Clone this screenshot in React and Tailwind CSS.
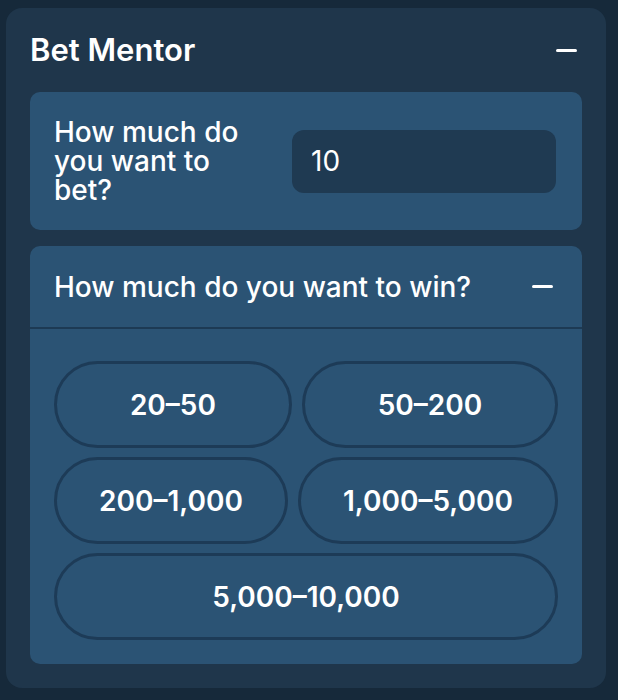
import React from "react";

const ranges = ["20–50", "50–200", "200–1,000", "1,000–5,000", "5,000–10,000"];

function MinusBar() {
  return <span className="block h-[3px] w-[21px] rounded-full bg-white" />;
}

export default function App() {
  return (
    <div
      className="min-h-[700px] bg-[#16293a] pl-[6px] pt-[8px] text-white"
      style={{ fontFamily: "Inter, 'Noto Sans', sans-serif" }}
    >
      <div className="flex h-[680px] w-[600px] flex-col rounded-[16px] bg-[#1f364b] p-6">
        <div className="mb-6 flex h-[36px] items-center justify-between">
          <h1 className="text-[31px] font-semibold leading-[36px]">Bet Mentor</h1>
          <span className="mr-[5px]">
            <MinusBar />
          </span>
        </div>

        <div className="flex h-[138px] items-center justify-between rounded-[10px] bg-[#2b5374] pl-6 pr-[26px]">
          <label className="w-[210px] text-[28px] font-medium leading-[29px]">
            How much do you want to bet?
          </label>
          <input
            readOnly
            value="10"
            className="h-[63px] w-[264px] rounded-[12px] bg-[#1f3a52] px-[19px] text-[28px] text-white outline-none"
          />
        </div>

        <div className="mt-4 flex-1 rounded-[10px] bg-[#2b5374]">
          <div className="flex h-[83px] items-center justify-between border-b-2 border-[#1d3a54] pl-6 pr-[29px]">
            <span className="text-[28px] font-medium">How much do you want to win?</span>
            <MinusBar />
          </div>
          <div className="flex flex-wrap gap-x-[10px] gap-y-[9px] px-6 pb-6 pt-8">
            {ranges.map((r) => (
              <button
                key={r}
                className="flex h-[87px] grow items-center justify-center rounded-full border-[3px] border-[#1d3b57] px-10 text-[28px] font-semibold text-white"
              >
                {r}
              </button>
            ))}
          </div>
        </div>
      </div>
    </div>
  );
}
